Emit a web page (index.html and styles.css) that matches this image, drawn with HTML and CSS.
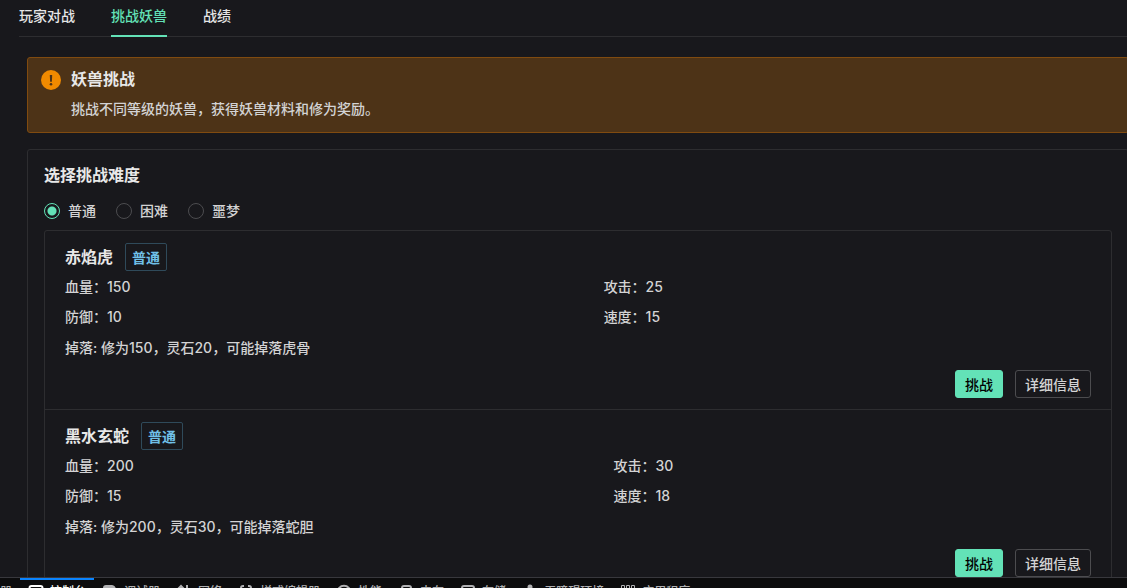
FILE: index.html
```html
<!DOCTYPE html>
<html lang="zh-CN">
<head>
    <meta charset="UTF-8">
    <meta name="viewport" content="width=device-width, initial-scale=1.0">
    <title>挑战妖兽</title>
    <link rel="stylesheet" href="styles.css">
</head>
<body>
    <main class="page">
        <nav class="tabs">
            <button class="tab" type="button">玩家对战</button>
            <button class="tab active" type="button">挑战妖兽</button>
            <button class="tab" type="button">战绩</button>
        </nav>
        <div class="tab-pane">
            <section class="alert">
                <svg class="alert-icon" viewBox="0 0 20 20">
                    <circle cx="10" cy="10" r="10" fill="#f08a00"/>
                    <path d="M8.800 5h2.400l-.3 6.700H9.100z" fill="#4d3317"/>
                    <circle cx="10" cy="14.200" r="1.300" fill="#4d3317"/>
                </svg>
                <div>
                    <h2 class="title">妖兽挑战</h2>
                    <p class="alert-text">挑战不同等级的妖兽，获得妖兽材料和修为奖励。</p>
                </div>
            </section>
            <section class="card">
                <h2 class="title">选择挑战难度</h2>
                <div class="radio-group">
                    <label class="radio"><input type="radio" name="difficulty" value="normal" checked>普通</label>
                    <label class="radio"><input type="radio" name="difficulty" value="hard">困难</label>
                    <label class="radio"><input type="radio" name="difficulty" value="nightmare">噩梦</label>
                </div>
                <ul class="monster-list">
                    <li class="monster">
                        <div class="monster-header">
                            <h3 class="title">赤焰虎</h3>
                            <span class="tag">普通</span>
                        </div>
                        <table class="stats">
                            <tr><td>血量：150</td><td>攻击：25</td></tr>
                            <tr><td>防御：10</td><td>速度：15</td></tr>
                        </table>
                        <p class="drops">掉落: 修为150，灵石20，可能掉落虎骨</p>
                        <div class="actions">
                            <button class="button primary" type="button">挑战</button>
                            <button class="button" type="button">详细信息</button>
                        </div>
                    </li>
                    <li class="monster">
                        <div class="monster-header">
                            <h3 class="title">黑水玄蛇</h3>
                            <span class="tag">普通</span>
                        </div>
                        <table class="stats">
                            <tr><td>血量：200</td><td>攻击：30</td></tr>
                            <tr><td>防御：15</td><td>速度：18</td></tr>
                        </table>
                        <p class="drops">掉落: 修为200，灵石30，可能掉落蛇胆</p>
                        <div class="actions">
                            <button class="button primary" type="button">挑战</button>
                            <button class="button" type="button">详细信息</button>
                        </div>
                    </li>
                </ul>
            </section>
        </div>
    </main>
    <footer class="devtools">
        <div class="devtools-tabs">
            <button class="devtools-tab" type="button">
                <svg viewBox="0 0 16 16"><path d="M3 2h10v12H3z"/></svg>查看器
            </button>
            <button class="devtools-tab active" type="button">
                <svg viewBox="0 0 16 16"><rect x="1.5" y="2" width="13" height="12" rx="2"/><path d="M4 6l3 2.500-3 2.500"/></svg>控制台
            </button>
            <button class="devtools-tab" type="button">
                <svg viewBox="0 0 16 16"><path class="solid" d="M2 4a2 2 0 0 1 2-2h6a3 3 0 0 1 2 1l3 5-3 5a3 3 0 0 1-2 1H4a2 2 0 0 1-2-2z"/></svg>调试器
            </button>
            <button class="devtools-tab" type="button">
                <svg viewBox="0 0 16 16"><path d="M5 14V2M2 5l3-3 3 3M11 1v13M8 11l3 3 3-3"/></svg>网络
            </button>
            <button class="devtools-tab" type="button">
                <svg viewBox="0 0 16 16"><path d="M6 2H5a2 2 0 0 0-2 2v2L1.500 8 3 10v2a2 2 0 0 0 2 2h1M10 2h1a2 2 0 0 1 2 2v2l1.500 2-1.500 2v2a2 2 0 0 1-2 2h-1"/></svg>样式编辑器
            </button>
            <button class="devtools-tab" type="button">
                <svg viewBox="0 0 16 16"><path d="M3.500 13.500a6.700 6.700 0 1 1 9 0zM8 9l3-3"/></svg>性能
            </button>
            <button class="devtools-tab" type="button">
                <svg viewBox="0 0 16 16"><rect x="4" y="2" width="9" height="12" rx="2"/><path d="M4 8h9"/></svg>内存
            </button>
            <button class="devtools-tab" type="button">
                <svg viewBox="0 0 16 16"><rect x="2" y="2" width="12" height="12" rx="2"/><path d="M2 6h12M2 10h12"/></svg>存储
            </button>
            <button class="devtools-tab" type="button">
                <svg viewBox="0 0 16 16"><circle class="solid" cx="8" cy="3" r="1.500"/><path d="M2 6l4 1h4l4-1M6 7v7M10 7v7"/></svg>无障碍环境
            </button>
            <button class="devtools-tab" type="button">
                <svg class="thin" viewBox="0 0 16 16"><path d="M1.500 1.500h3v3h-3zM6.500 1.500h3v3h-3zM11.500 1.500h3v3h-3zM1.500 6.500h3v3h-3zM6.500 6.500h3v3h-3zM11.500 6.500h3v3h-3zM1.500 11.500h3v3h-3zM6.500 11.500h3v3h-3zM11.500 11.500h3v3h-3z"/></svg>应用程序
            </button>
        </div>
    </footer>
</body>
</html>
```
FILE: styles.css
```css
* {
    box-sizing: border-box;
}
body {
    display: flex;
    flex-direction: column;
    height: 100vh;
    margin: 0;
    overflow: hidden;
    background-color: #18181c;
    color: #d3d3d4;
    font-family: Inter, "Noto Sans CJK SC", sans-serif;
    font-size: 14px;
    font-weight: 500;
    line-height: 22px;
}
button {
    font: inherit;
    color: inherit;
    background: none;
    border: none;
    padding: 0;
    cursor: pointer;
}
h2, h3, p, ul {
    margin: 0;
    padding: 0;
}
.page {
    flex: 1;
    min-height: 0;
    overflow: hidden;
    padding-left: 19px;
}
.tabs {
    display: flex;
    gap: 36px;
    height: 37px;
    border-bottom: 1px solid #2d2d30;
}
.tab {
    height: 37px;
    padding-bottom: 3px;
    border-bottom: 2px solid transparent;
    color: #e6e6e7;
}
.tab.active {
    color: #63e2b7;
    border-color: #63e2b7;
}
.tab-pane {
    margin: 20px -2px 0 8px;
}
.title {
    color: #e8e8e8;
    font-size: 16px;
    font-weight: 600;
    line-height: 24px;
}
.alert {
    display: flex;
    gap: 10px;
    height: 76px;
    padding: 9px 13px;
    background-color: #4d3317;
    border: 1px solid #804b10;
    border-radius: 3px;
}
.alert-icon {
    width: 20px;
    height: 20px;
    margin-top: 3px;
}
.alert-text {
    margin-top: 7px;
}
.card {
    margin-top: 16px;
    padding: 13px 16px 16px;
    border: 1px solid #2d2d30;
    border-radius: 3px;
}
.radio-group {
    display: flex;
    gap: 20px;
    margin-top: 13px;
}
.radio {
    display: flex;
    align-items: center;
    gap: 8px;
}
.radio input {
    appearance: none;
    width: 16px;
    height: 16px;
    margin: 0;
    border: 1px solid #4c4c4f;
    border-radius: 50%;
}
.radio input:checked {
    border-color: #63e2b7;
    background: radial-gradient(circle, #63e2b7 4px, transparent 5px);
}
.monster-list {
    margin-top: 8px;
    border: 1px solid #2d2d30;
    border-radius: 3px;
    list-style: none;
}
.monster {
    padding: 12px 20px 11px;
}
.monster + .monster {
    border-top: 1px solid #2d2d30;
}
.monster-header {
    display: flex;
    align-items: center;
    gap: 12px;
}
.tag {
    height: 28px;
    padding: 2px 6px;
    border: 1px solid #2f4a5a;
    border-radius: 2px;
    color: #70c0e8;
    font-weight: 600;
    line-height: 24px;
}
.stats {
    width: 100%;
    margin-top: 1px;
    border-collapse: collapse;
}
.stats td {
    height: 30px;
    padding: 0;
}
.drops {
    line-height: 30px;
    margin-top: 1px;
}
.actions {
    display: flex;
    justify-content: flex-end;
    gap: 12px;
    margin-top: 7px;
}
.button {
    height: 28px;
    padding: 2px 9px 0;
    border: 1px solid #4c4c4f;
    border-radius: 3px;
}
.button.primary {
    background-color: #63e2b7;
    border-color: #63e2b7;
    color: #000;
}
/* Only the top edge of the panel is in view */
.devtools {
    height: 11px;
    overflow: hidden;
    background-color: #0c0c0d;
    border-top: 1px solid #38383d;
}
.devtools-tabs {
    display: flex;
    margin-left: -54px;
}
.devtools-tab {
    display: flex;
    flex: none;
    align-items: center;
    gap: 6px;
    height: 26px;
    padding: 0 8px;
    border-top: 2px solid transparent;
    color: #b1b1b3;
    font-size: 12px;
    line-height: 18px;
}
.devtools-tab.active {
    border-color: #0a84ff;
    color: #fff;
}
.devtools-tab svg {
    width: 16px;
    height: 16px;
    fill: none;
    stroke: currentColor;
    stroke-width: 2;
}
.devtools-tab .thin {
    stroke-width: 1;
}
.devtools-tab .solid {
    fill: currentColor;
}
```
